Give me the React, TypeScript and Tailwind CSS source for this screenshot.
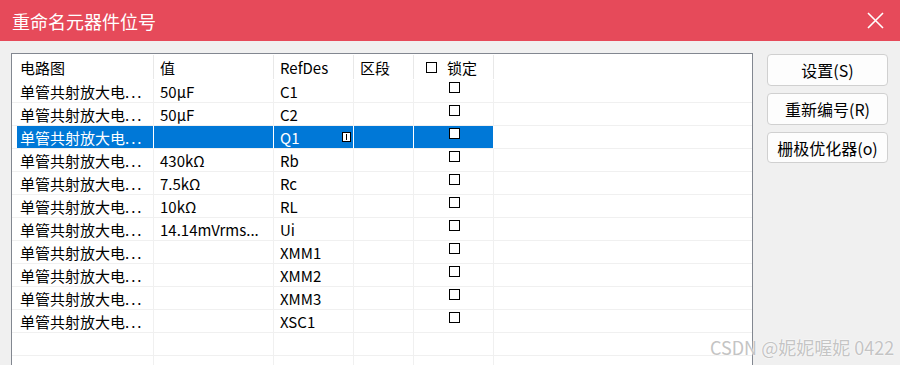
import React from "react";

const rows: { value: string; ref: string; sel?: boolean }[] = [
  { value: "50μF", ref: "C1" },
  { value: "50μF", ref: "C2" },
  { value: "", ref: "Q1", sel: true },
  { value: "430kΩ", ref: "Rb" },
  { value: "7.5kΩ", ref: "Rc" },
  { value: "10kΩ", ref: "RL" },
  { value: "14.14mVrms...", ref: "Ui" },
  { value: "", ref: "XMM1" },
  { value: "", ref: "XMM2" },
  { value: "", ref: "XMM3" },
  { value: "", ref: "XSC1" },
  { value: "", ref: "" },
  { value: "", ref: "" },
];

const font = { fontFamily: '"Noto Sans CJK SC", "Noto Sans", sans-serif' };

function Box() {
  return <div className="w-[11px] h-[11px] border border-black bg-white" />;
}

const cols = "grid grid-cols-[142px_120px_80px_60px_80px_1fr]";

export default function App() {
  return (
    <div className="relative w-[900px] h-[365px] overflow-hidden bg-[#f0f0f0] text-black" style={font}>
      <div className="h-[41px] bg-[#e64a5a] flex items-center justify-between pl-[12px] pr-[16px]">
        <span className="text-white text-[18px] leading-none">重命名元器件位号</span>
        <svg width="17" height="17" viewBox="0 0 17 17">
          <path d="M1 1 L16 16 M16 1 L1 16" stroke="white" strokeWidth="1.6" />
        </svg>
      </div>
      <div className="flex">
        <div className="ml-[11px] mt-[12px] w-[742px] h-[320px] border border-[#828790] bg-white text-[15px] leading-none">
          <div className={`${cols} h-[26px]`}>
            <div className="border-r border-[#e8e8e8] my-[1px] flex items-center pl-[8px]">电路图</div>
            <div className="border-r border-[#e8e8e8] my-[1px] flex items-center pl-[6px]">值</div>
            <div className="border-r border-[#e8e8e8] my-[1px] flex items-center pl-[6px]">RefDes</div>
            <div className="border-r border-[#e8e8e8] my-[1px] flex items-center pl-[6px]">区段</div>
            <div className="border-r border-[#e8e8e8] my-[1px] flex items-center pl-[12px] gap-[10px]">
              <Box />
              <span>锁定</span>
            </div>
            <div />
          </div>
          {rows.map((r, i) => {
            const sel = !!r.sel;
            const cell = `h-[23px] border-b border-r ${sel ? "border-r-white border-b-[#f0f0f0] bg-[#0078d7] text-white" : "border-[#f0f0f0]"} flex items-center`;
            return (
              <div key={i} className={cols}>
                <div className={`h-[23px] border-b border-r ${sel ? "border-r-white border-b-[#f0f0f0]" : "border-[#f0f0f0]"} pl-[5px]`}>
                  <div className={`h-full flex items-center pl-[3px] ${sel ? "bg-[#0078d7] text-white" : ""}`}>
                    {r.ref ? (
                      <>
                        单管共射放大电<span className="tracking-[2px]">...</span>
                      </>
                    ) : ""}
                  </div>
                </div>
                <div className={`${cell} pl-[6px]`}>{r.value}</div>
                <div className={`${cell} pl-[6px] relative`}>
                  {r.ref}
                  {sel && (
                    <div className="absolute right-[2px] top-[6px] w-[9px] h-[10px] border border-black bg-white flex justify-center items-center">
                      <div className="w-[1px] h-[6px] bg-black" />
                    </div>
                  )}
                </div>
                <div className={cell} />
                <div className={`${cell} !items-start justify-center pt-[2px] pl-[2px]`}>
                  {r.ref ? <Box /> : null}
                </div>
                <div className="h-[23px] border-b border-[#f0f0f0]" />
              </div>
            );
          })}
        </div>
        <div className="ml-[14px] mt-[13px] flex flex-col gap-[7px]">
          {["设置(S)", "重新编号(R)", "栅极优化器(o)"].map((t, i) => (
            <div
              key={t}
              className={`w-[121px] ${i === 2 ? "h-[31px]" : "h-[32px]"} border border-[#d0d0d0] bg-[#fdfdfd] rounded-[4px] flex items-center justify-center text-[16px]`}
            >
              {t}
            </div>
          ))}
        </div>
      </div>
      <div
        className="absolute left-[710px] top-[338px] text-[18px] text-[#c4c4c4] leading-none"
        style={{ textShadow: "0 0 1px #fff, 0 0 2px #fff" }}
      >
        CSDN @妮妮喔妮 0422
      </div>
    </div>
  );
}
